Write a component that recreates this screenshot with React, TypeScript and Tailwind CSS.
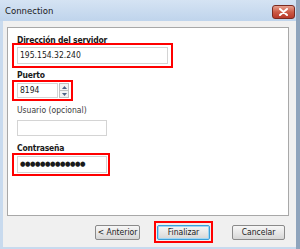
import React from "react";

const font = { fontFamily: '"DejaVu Sans Condensed", "DejaVu Sans", sans-serif' };

function Btn({ children, focused }: { children: React.ReactNode; focused?: boolean }) {
  return (
    <div
      className={`h-[15px] flex items-center justify-center rounded-[2px] border text-[8.5px] text-[#222] bg-gradient-to-b from-[#f6f6f6] via-[#e8e8e8] to-[#d6d6d6] ${
        focused ? "border-[#3c9fd8] shadow-[inset_0_0_0_1px_#9fd6f5]" : "border-[#8a8a8a]"
      }`}
    >
      {children}
    </div>
  );
}

export default function App() {
  return (
    <div style={font} className="w-[300px] h-[249px] bg-[#c8daee] flex flex-col border-r-[4px] border-r-[#8fa4bc] overflow-hidden">
      {/* Title bar */}
      <div className="h-[21px] flex items-center pl-[5px] pr-[1px] bg-gradient-to-b from-[#d5e3f3] to-[#bfd4ec]">
        <span className="text-[9.5px] text-[#1a1a1a] mt-[2px]">Connection</span>
        <div className="ml-auto mt-[2px] w-[23px] h-[14px] rounded-[3px] border border-[#7a2a20] bg-gradient-to-b from-[#e6a08f] via-[#cc5a46] to-[#b8392a] flex items-center justify-center">
          <svg width="9" height="8" viewBox="0 0 9 8">
            <path d="M1 1 L8 7 M8 1 L1 7" stroke="#fff" strokeWidth="2" strokeLinecap="round" />
          </svg>
        </div>
      </div>
      {/* Body */}
      <div className="flex-1 ml-[3px] mb-[2px] bg-[#f0f0f0] flex flex-col px-[4px] pt-[6px]">
        <div className="w-[282px] h-[189px] bg-white border border-[#a8a8a8] flex flex-col pl-[4px] pt-[6px]">
          <div className="text-[8.5px] font-bold tracking-[-0.2px] text-[#1a1a1a] leading-[12px] pl-[5px]">Dirección del servidor</div>
          <div className="mt-[-3px] w-[161px] h-[25px] border-2 border-[#ff0000] flex items-center pl-[3px]">
            <div className="w-[151px] h-[17px] border border-[#d4d4d4] flex items-center pl-[2px] text-[8.5px] text-[#1a1a1a]">
              195.154.32.240
            </div>
          </div>
          <div className="mt-[1px] text-[8.5px] font-bold tracking-[-0.2px] text-[#1a1a1a] leading-[12px] pl-[5px]">Puerto</div>
          <div className="mt-[-1px] w-[61px] h-[21px] border-2 border-[#ff0000] flex items-center pl-[3px]">
            <div className="w-[41px] h-[15px] border border-[#d4d4d4] flex items-center pl-[2px] text-[8.5px] text-[#1a1a1a]">
              8194
            </div>
            <div className="w-[10px] h-[15px] flex flex-col ml-[1px]">
              <div className="flex-1 border border-[#c0c0c0] bg-[#f2f2f2] flex items-center justify-center">
                <svg width="5" height="3" viewBox="0 0 5 3"><path d="M0 3 L2.5 0 L5 3Z" fill="#4d6185" /></svg>
              </div>
              <div className="flex-1 border border-t-0 border-[#c0c0c0] bg-[#f2f2f2] flex items-center justify-center">
                <svg width="5" height="3" viewBox="0 0 5 3"><path d="M0 0 L2.5 3 L5 0Z" fill="#4d6185" /></svg>
              </div>
            </div>
          </div>
          <div className="mt-[3px] text-[8.5px] text-[#3c3c3c] leading-[12px] pl-[5px]">Usuario (opcional)</div>
          <div className="mt-[4px] ml-[5px] w-[90px] h-[16px] border border-[#d4d4d4]" />
          <div className="mt-[6px] text-[8.5px] font-bold tracking-[-0.2px] text-[#1a1a1a] leading-[12px] pl-[5px]">Contraseña</div>
          <div className="mt-[-1px] w-[98px] h-[23px] border-2 border-[#ff0000] flex items-center pl-[3px]">
            <div className="w-[90px] h-[17px] border border-[#d4d4d4] flex items-center pl-[2px] text-[7px] tracking-[-0.5px] text-[#1a1a1a]">
              ●●●●●●●●●●●●●
            </div>
          </div>
        </div>
        {/* Buttons */}
        <div className="flex items-center mt-[5px]">
          <div className="ml-[88px] w-[45px]"><Btn>&lt; Anterior</Btn></div>
          <div className="ml-[14px] w-[59px] h-[22px] border-2 border-[#ff0000] flex items-center justify-center">
            <div className="w-[53px]"><Btn focused>Finalizar</Btn></div>
          </div>
          <div className="ml-[19px] w-[53px]"><Btn>Cancelar</Btn></div>
        </div>
      </div>
    </div>
  );
}
